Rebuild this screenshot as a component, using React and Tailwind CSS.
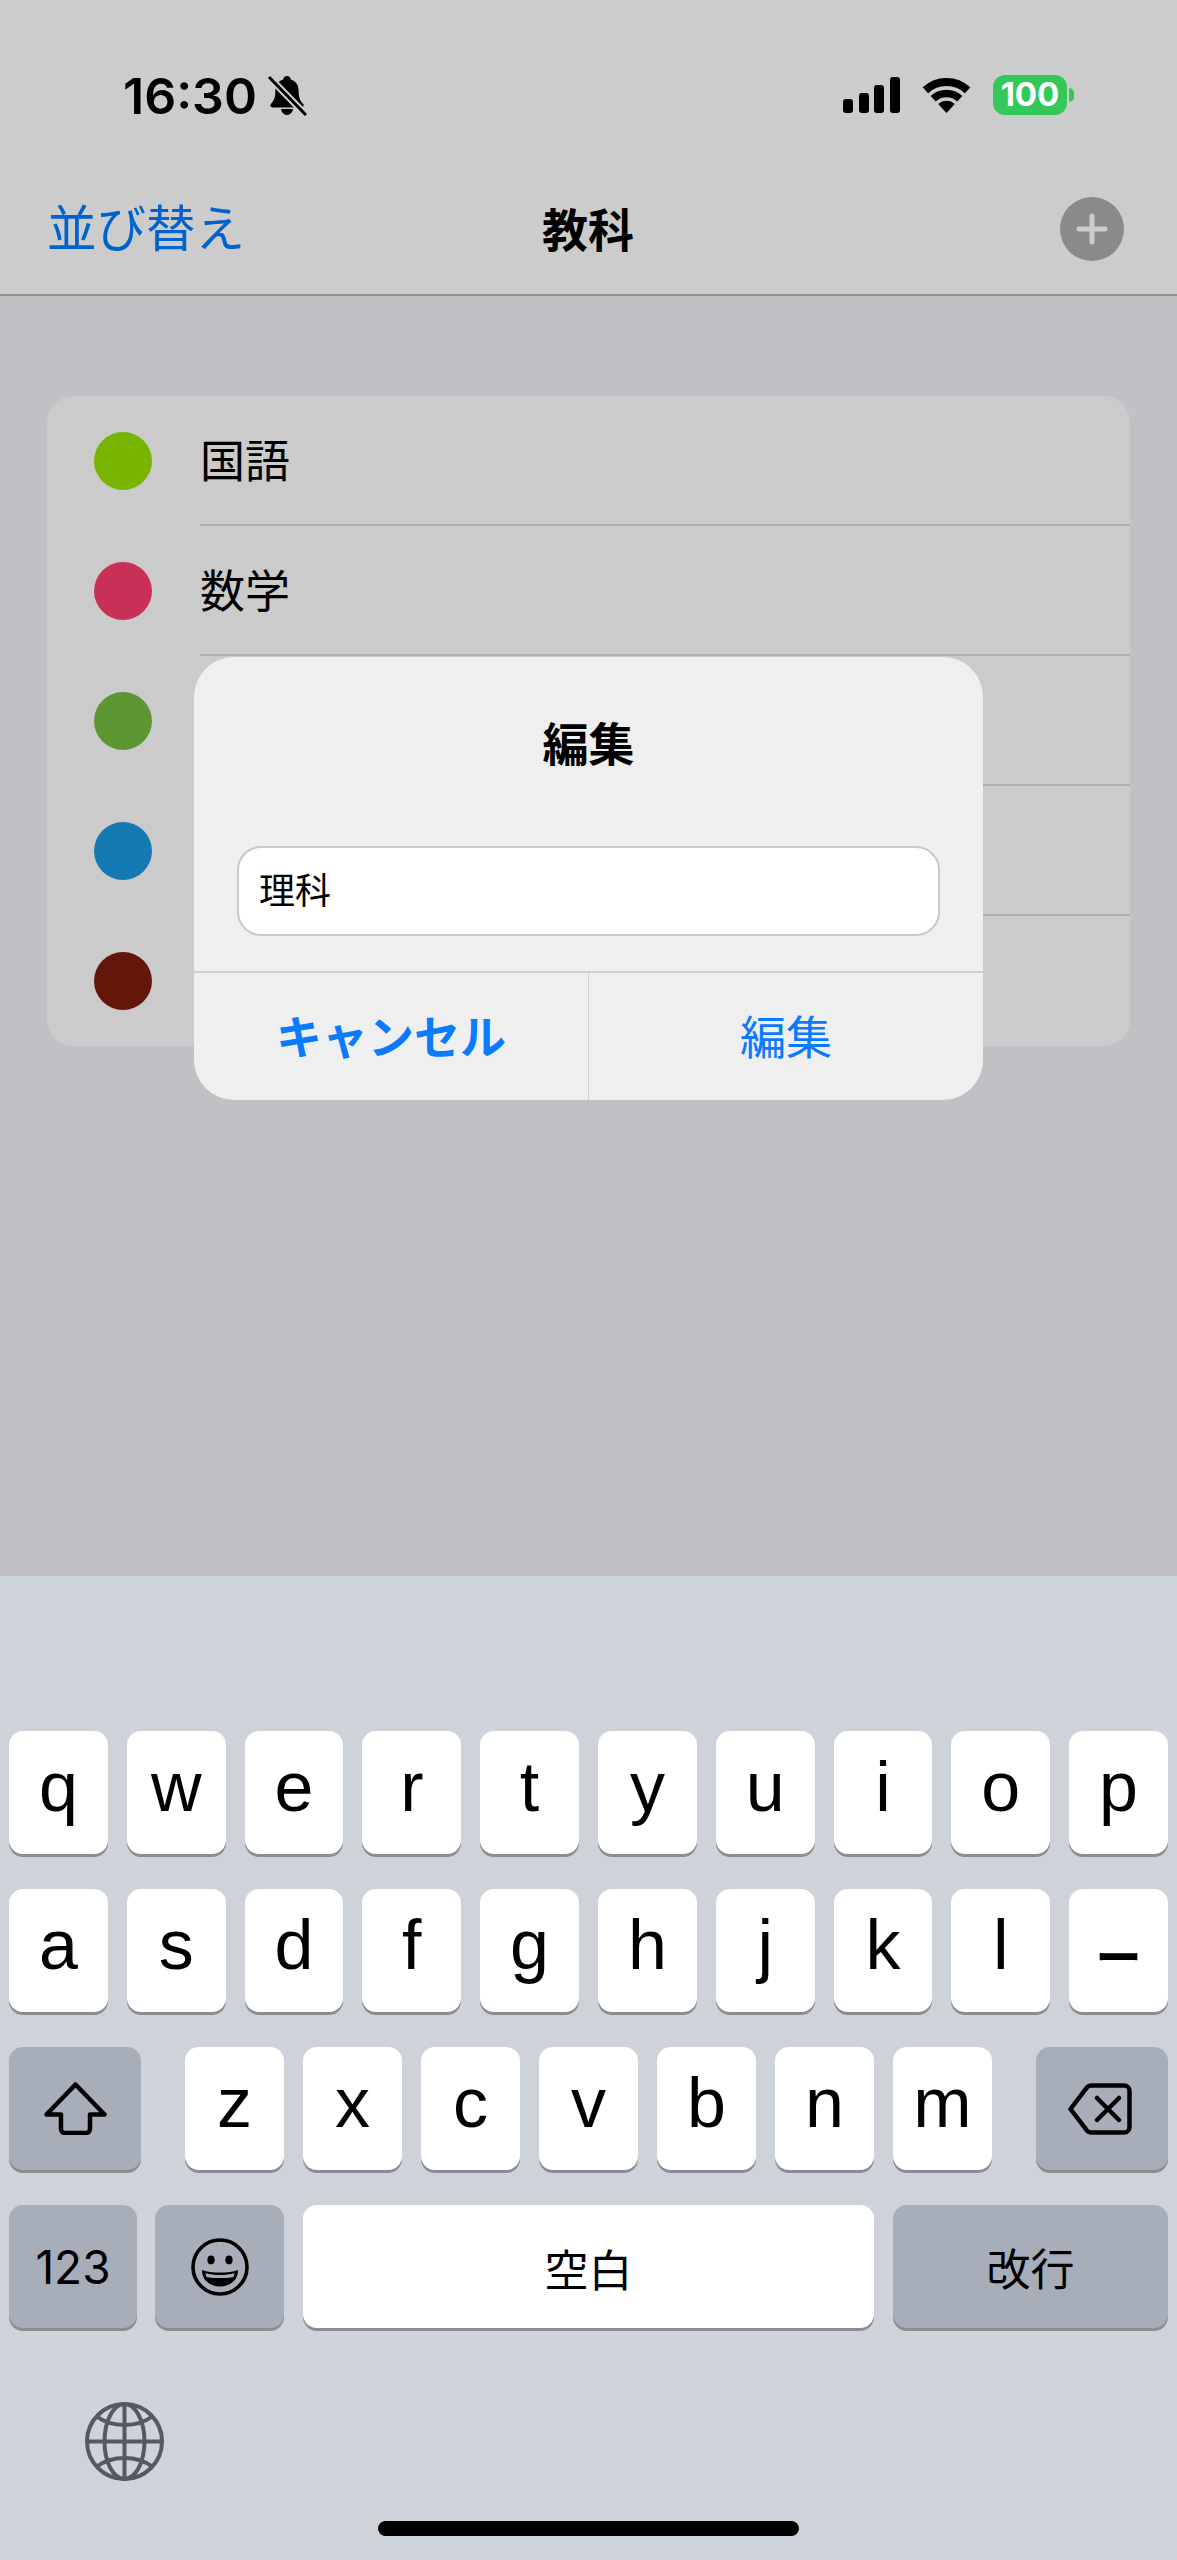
import React from 'react';

const SANS = "font-['Liberation_Sans','Noto_Sans_CJK_JP',sans-serif]";

const subjects = [
  { name: '国語', color: 'bg-[#78b400]' },
  { name: '数学', color: 'bg-[#c93058]' },
  { name: '', color: 'bg-[#5e9632]' },
  { name: '', color: 'bg-[#157ab2]' },
  { name: '', color: 'bg-[#63170a]' },
];

function Key({ children, dark, className = '' }) {
  return (
    <div className={`flex h-[123px] items-center justify-center rounded-[14px] shadow-[0_3px_0_#8b8d92] ${dark ? 'bg-[#a8aeb9]' : 'bg-white'} ${className}`}>
      {children}
    </div>
  );
}

function LetterKey({ label, className = 'flex-1' }) {
  return (
    <Key className={className}>
      <span className="pb-[12px] text-[70px] leading-none text-black">{label}</span>
    </Key>
  );
}

function BellSlash() {
  return (
    <svg width="40" height="41" viewBox="0 0 40 41">
      <path d="M20 1c2.200 0 3.500 1.500 3.800 3.400 5 1.400 7.800 5.600 7.800 11 0 6.500 1.200 9.800 4.400 13.400 1.300 1.500.5 3.700-1.800 3.700H5.800c-2.300 0-3.100-2.200-1.800-3.700 3.200-3.600 4.400-6.900 4.400-13.400 0-5.400 2.800-9.600 7.800-11C16.500 2.500 17.800 1 20 1z" fill="#000" />
      <path d="M14 34h12c-.6 3.500-3 6-6 6s-5.400-2.500-6-6z" fill="#000" />
      <path d="M1 1l37 38" stroke="#cccccc" strokeWidth="7" fill="none" />
      <path d="M2 2l37 38" stroke="#000" strokeWidth="3" fill="none" />
    </svg>
  );
}

function Signal() {
  return (
    <div className="flex h-[36px] items-end gap-[5.7px]">
      <div className="h-[14px] w-[10px] rounded-[3px] bg-black" />
      <div className="h-[20px] w-[10px] rounded-[3px] bg-black" />
      <div className="h-[28px] w-[10px] rounded-[3px] bg-black" />
      <div className="h-[36px] w-[10px] rounded-[3px] bg-black" />
    </div>
  );
}

function Wifi() {
  return (
    <svg width="49" height="36" viewBox="0 0 49 36">
      <path d="M3.400 13.300a31 31 0 0 1 42.200 0" stroke="#000" strokeWidth="8" fill="none" />
      <path d="M11.200 21.700a19.500 19.500 0 0 1 26.600 0" stroke="#000" strokeWidth="7.500" fill="none" />
      <path d="M24.500 36l-8.300-8.900a11.800 11.800 0 0 1 16.600 0z" fill="#000" />
    </svg>
  );
}

function Battery() {
  return (
    <div className="flex items-center gap-[2px]">
      <div className="flex h-[40px] w-[74px] items-center justify-center rounded-[12px] bg-[#34c85a] font-['Inter',sans-serif] text-[33px] font-bold text-white">
        100
      </div>
      <div className="h-[14px] w-[5px] rounded-r-full bg-[#34c85a]" />
    </div>
  );
}

function ShiftIcon() {
  return (
    <svg width="63" height="53" viewBox="0 0 63 53" fill="none" stroke="#000" strokeWidth="4.500" strokeLinejoin="round">
      <path d="M31.500 2.500L60.500 32.500H46V47a4 4 0 0 1-4 4H21a4 4 0 0 1-4-4V32.500H2.500z" />
    </svg>
  );
}

function DeleteIcon() {
  return (
    <svg width="65" height="52" viewBox="0 0 65 52" fill="none" stroke="#000" strokeWidth="4.500" strokeLinejoin="round" strokeLinecap="round" className="mr-[3px]">
      <path d="M23 2.500H56a5.500 5.500 0 0 1 5.500 5.500v36a5.500 5.500 0 0 1-5.500 5.500H23a6 6 0 0 1-4-1.800L2.500 26 19 4.300a6 6 0 0 1 4-1.800z" />
      <path d="M29 15l22 22M51 15L29 37" />
    </svg>
  );
}

function EmojiIcon() {
  return (
    <svg width="58" height="58" viewBox="0 0 58 58">
      <circle cx="29" cy="29" r="27" fill="none" stroke="#000" strokeWidth="3.600" />
      <ellipse cx="20" cy="22" rx="3.600" ry="4.400" fill="#000" />
      <ellipse cx="38" cy="22" rx="3.600" ry="4.400" fill="#000" />
      <path d="M11 32c5 1.800 11 2.600 18 2.600s13-.8 18-2.600c.4 9.500-7.500 16.500-18 16.500S10.600 41.500 11 32z" fill="#000" />
      <path d="M14.500 35.200c4.500 1.200 9.200 1.800 14.500 1.800s10-.6 14.500-1.800c-.2 1.400-.5 2.600-1 3.700-4 .8-8.500 1.200-13.500 1.200s-9.500-.4-13.500-1.200c-.5-1.100-.8-2.300-1-3.700z" fill="#a8aeb9" />
    </svg>
  );
}

function GlobeIcon() {
  return (
    <svg width="79" height="79" viewBox="0 0 79 79" fill="none" stroke="#545a64" strokeWidth="4">
      <circle cx="39.500" cy="39.500" r="37.500" />
      <ellipse cx="39.500" cy="39.500" rx="20" ry="37.500" />
      <path d="M39.500 2v75M2 39.500h75" />
      <path d="M11 14c8 6 17.500 9 28.500 9S60 20 68 14" />
      <path d="M11 65c8-6 17.500-9 28.500-9S60 59 68 65" />
    </svg>
  );
}

export default function App() {
  return (
    <div className={`flex h-[2560px] w-[1177px] flex-col overflow-hidden bg-[#c0c0c5] ${SANS}`}>
      {/* status bar + nav */}
      <header className="h-[296px] shrink-0 border-b-2 border-[#8f8f8f] bg-[#cccccc]">
        <div className="flex h-[190px] items-start justify-between pl-[123px] pr-[103px] pt-[75px]">
          <div className="flex items-center gap-[10px]">
            <span className="font-['Inter',sans-serif] text-[50px] font-semibold leading-[40px] text-black">16:30</span>
            <BellSlash />
          </div>
          <div className="flex items-center gap-[22px]">
            <Signal />
            <Wifi />
            <Battery />
          </div>
        </div>
        <div className="relative flex h-[78px] items-center justify-between pl-[47px] pr-[53px]">
          <span className="pt-[2px] text-[49.5px] leading-none text-[#0062cc]">並び替え</span>
          <span className="absolute left-[542px] pt-[3px] text-[46px] font-bold leading-none text-black">教科</span>
          <div className="flex h-[64px] w-[64px] items-center justify-center rounded-full bg-[#8a8a8a]">
            <svg width="34" height="34" viewBox="0 0 34 34" stroke="#cccccc" strokeWidth="5" strokeLinecap="round">
              <path d="M17 4v26M4 17h26" />
            </svg>
          </div>
        </div>
      </header>

      <main className="relative flex-1">
        <section className="ml-[47px] mt-[100px] w-[1083px] overflow-hidden rounded-[26px] bg-[#cbcbcb]">
          {subjects.map((s, i) => (
            <div key={i} className="flex h-[130px] items-center">
              <div className={`ml-[47px] h-[58px] w-[58px] shrink-0 rounded-full ${s.color}`} />
              <div className={`ml-[48px] flex h-full flex-1 items-center ${i < subjects.length - 1 ? 'border-b-2 border-[#aeaeae]' : ''}`}>
                <span className="pt-[4px] text-[45px] leading-none text-black">{s.name}</span>
              </div>
            </div>
          ))}
        </section>

        {/* edit dialog */}
        <div className="absolute left-[194px] top-[361px] flex h-[443px] w-[789px] flex-col rounded-[40px] bg-[#efefef]">
          <div className="flex h-[189px] shrink-0 items-center justify-center pb-[14px] text-[46px] font-bold leading-none text-black">編集</div>
          <div className="mx-[43px] flex h-[90px] shrink-0 items-center rounded-[24px] border-2 border-[#c9c9c9] bg-white pl-[20px] pt-[2px] text-[36px] leading-none text-black">
            理科
          </div>
          <div className="mt-[35px] flex flex-1 border-t-2 border-[#cfcfcf]">
            <div className="flex flex-1 items-center justify-center border-r border-[#cfcfcf] pt-[2px] text-[46px] font-bold leading-none text-[#0a7aff]">キャンセル</div>
            <div className="flex flex-1 items-center justify-center pt-[2px] text-[46px] font-normal leading-none text-[#0a7aff]">編集</div>
          </div>
        </div>
      </main>

      {/* keyboard */}
      <footer className="relative flex h-[984px] shrink-0 flex-col gap-[35px] bg-[#ced2d9] px-[9px] pt-[155px]">
        <div className="flex gap-[19px]">
          {['q', 'w', 'e', 'r', 't', 'y', 'u', 'i', 'o', 'p'].map((k) => <LetterKey key={k} label={k} />)}
        </div>
        <div className="flex gap-[19px]">
          {['a', 's', 'd', 'f', 'g', 'h', 'j', 'k', 'l'].map((k) => <LetterKey key={k} label={k} />)}
          <Key className="flex-1">
            <span className="pt-[14px] text-[46px] font-semibold leading-none text-black">ー</span>
          </Key>
        </div>
        <div className="flex justify-between">
          <Key dark className="w-[132px]"><ShiftIcon /></Key>
          <div className="flex w-[807px] gap-[19px]">
            {['z', 'x', 'c', 'v', 'b', 'n', 'm'].map((k) => <LetterKey key={k} label={k} />)}
          </div>
          <Key dark className="w-[132px]"><DeleteIcon /></Key>
        </div>
        <div className="flex gap-[19px]">
          <Key dark className="w-[128px]">
            <span className="font-['Inter',sans-serif] text-[46px] leading-none text-black">123</span>
          </Key>
          <Key dark className="-ml-[1px] w-[129px]"><EmojiIcon /></Key>
          <Key className="flex-1"><span className="pt-[10px] text-[44px] leading-none text-black">空白</span></Key>
          <Key dark className="w-[275px]"><span className="pt-[9px] text-[44px] leading-none text-black">改行</span></Key>
        </div>
        <div className="ml-[76px] mt-[39px]">
          <GlobeIcon />
        </div>
        <div className="absolute bottom-[24px] left-[378px] h-[15px] w-[421px] rounded-full bg-black" />
      </footer>
    </div>
  );
}
